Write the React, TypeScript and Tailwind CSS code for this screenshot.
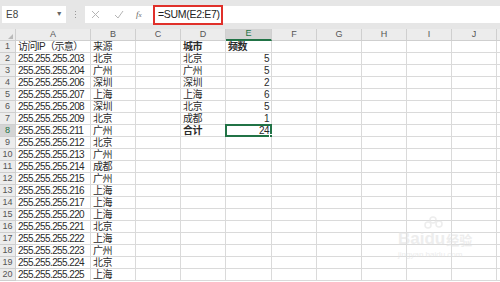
import React from "react";

const aCol = [
  "访问IP（示意）",
  "255.255.255.203",
  "255.255.255.204",
  "255.255.255.206",
  "255.255.255.207",
  "255.255.255.208",
  "255.255.255.209",
  "255.255.255.211",
  "255.255.255.212",
  "255.255.255.213",
  "255.255.255.214",
  "255.255.255.215",
  "255.255.255.216",
  "255.255.255.217",
  "255.255.255.220",
  "255.255.255.221",
  "255.255.255.222",
  "255.255.255.223",
  "255.255.255.224",
  "255.255.255.225",
];
const bCol = [
  "来源", "北京", "广州", "深圳", "上海", "深圳", "北京", "广州", "北京", "广州",
  "成都", "广州", "上海", "上海", "上海", "北京", "上海", "广州", "北京", "上海",
];
const dCol = ["城市", "北京", "广州", "深圳", "上海", "北京", "成都", "合计"];
const eCol = ["频数", "5", "5", "2", "6", "5", "1", "24"];

const letters = ["A", "B", "C", "D", "E", "F", "G", "H", "I", "J", ""];
const widths = ["w-[75px]", "w-[45px]", "w-[45px]", "w-[45px]", "w-[46px]", "w-[45px]", "w-[45px]", "w-[45px]", "w-[45px]", "w-[45px]", "w-[45px]"];

export default function App() {
  return (
    <div className="relative w-[500px] h-[282px] overflow-hidden bg-white font-['Liberation_Sans','Noto_Sans_CJK_SC',sans-serif] text-[10px] tracking-[-0.6px] text-[#2a2a2a]">
      {/* formula bar */}
      <div className="h-[29px] bg-[#e6e6e6] flex items-start pt-[6px]">
        <div className="ml-[2px] w-[64px] h-[17px] bg-white flex items-center justify-between px-[4px] text-[#444] text-[10px]">
          <span className="tracking-normal">E8</span>
          <span className="text-[7px] text-[#666]">▼</span>
        </div>
        <div className="w-[19px] h-[17px] flex flex-col items-center justify-center gap-[2px]">
          <div className="w-[1px] h-[1px] bg-[#999]" />
          <div className="w-[1px] h-[1px] bg-[#999]" />
          <div className="w-[1px] h-[1px] bg-[#999]" />
        </div>
        <div className="flex-1 h-[17px] bg-white flex items-center">
          <div className="w-[68px] flex items-center text-[#aaa]">
            <svg width="9" height="9" viewBox="0 0 9 9" className="ml-[6px]">
              <path d="M1 1 L8 8 M8 1 L1 8" stroke="#b5b5b5" strokeWidth="1" fill="none" />
            </svg>
            <svg width="10" height="9" viewBox="0 0 10 9" className="ml-[14px]">
              <path d="M1 5 L4 8 L9 1" stroke="#b5b5b5" strokeWidth="1" fill="none" />
            </svg>
            <span className="ml-[12px] italic text-[9px] text-[#666] font-['Liberation_Serif',serif] tracking-normal">
              f<span className="text-[7px]">x</span>
            </span>
          </div>
          <div className="h-[20px] w-[70px] border-2 border-[#e0302a] flex items-center pl-[3px] text-[10.5px] tracking-[-0.3px] text-[#222]">
            =SUM(E2:E7)
          </div>
        </div>
      </div>

      {/* header row */}
      <div className="flex h-[12px] bg-[#ececec] text-[#555] text-[9px] tracking-normal">
        <div className="relative w-[16px] shrink-0 border-r border-b border-[#cfcfcf]">
          <svg width="5" height="5" viewBox="0 0 5 5" className="absolute right-[2px] bottom-[1px]">
            <path d="M5 0 L5 5 L0 5 Z" fill="#b9b9b9" />
          </svg>
        </div>
        {letters.map((l, i) => (
          <div
            key={i}
            className={`${widths[i]} shrink-0 flex items-center justify-center border-r ${
              l === "E" ? "bg-[#d4d4d4] border-b-2 border-b-[#217346] border-r-[#cfcfcf] text-[#217346]" : "border-b border-[#cfcfcf]"
            }`}
          >
            {l}
          </div>
        ))}
      </div>

      {/* rows */}
      {aCol.map((a, r) => {
        const rowNum = r + 1;
        const bold = rowNum === 1 || rowNum === 8;
        return (
          <div key={r} className="flex h-[12px]">
            <div
              className={`w-[16px] shrink-0 flex items-center justify-center border-r border-b border-[#cfcfcf] text-[9px] tracking-normal ${
                rowNum === 8 ? "bg-[#d4d4d4] text-[#217346]" : "bg-[#ececec] text-[#555]"
              }`}
            >
              {rowNum}
            </div>
            {widths.map((w, c) => {
              let content: string = "";
              let align = "justify-start pl-[2px]";
              let weight = "";
              if (c === 0) content = a;
              if (c === 1) content = bCol[r];
              if (c === 3 && r < 8) {
                content = dCol[r];
                if (bold) weight = "font-bold";
              }
              if (c === 4 && r < 8) {
                content = eCol[r];
                if (r === 0) weight = "font-bold";
                else align = "justify-end pr-[2px]";
              }
              const selected = c === 4 && rowNum === 8;
              return (
                <div
                  key={c}
                  className={`${w} shrink-0 relative flex items-center whitespace-nowrap overflow-visible border-r border-b border-[#dadada] ${align} ${weight}`}
                >
                  {content}
                  {selected && (
                    <div className="absolute left-[-1px] top-[-1px] w-[47px] h-[13px] border-2 border-[#217346]">
                      <div className="absolute right-[-3px] bottom-[-3px] w-[4px] h-[4px] bg-[#217346] border border-white" />
                    </div>
                  )}
                </div>
              );
            })}
          </div>
        );
      })}

      {/* Baidu watermark */}
      <div className="absolute left-[398px] top-[230px] flex flex-col items-start opacity-60 pointer-events-none tracking-normal">
        <div className="flex items-end text-[#e2e2e2] font-bold text-[17px] leading-none">
          <span>Bai</span>
          <span className="relative">
            du
            <svg width="22" height="14" viewBox="0 0 22 14" className="absolute left-[-2px] top-[-14px]">
              <circle cx="6" cy="9" r="3" fill="none" stroke="#e2e2e2" strokeWidth="1.5" />
              <circle cx="11" cy="4" r="3" fill="none" stroke="#e2e2e2" strokeWidth="1.5" />
              <circle cx="17" cy="8" r="3" fill="none" stroke="#e2e2e2" strokeWidth="1.5" />
            </svg>
          </span>
          <span className="text-[13px] ml-[1px]">经验</span>
        </div>
        <div className="text-[8px] text-[#e2e2e2] mt-[2px]">jingyan.baidu.com</div>
      </div>
    </div>
  );
}
